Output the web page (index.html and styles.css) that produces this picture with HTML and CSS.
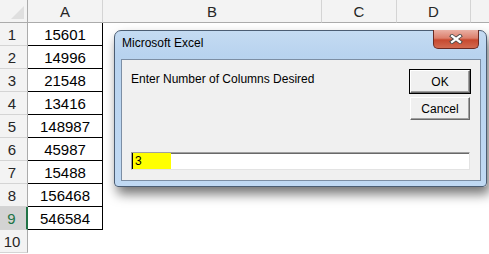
FILE: index.html
```
<!DOCTYPE html>
<html lang="en">
<head>
    <meta charset="UTF-8">
    <title>Microsoft Excel - InputBox</title>
    <link rel="stylesheet" href="styles.css">
</head>
<body>
    <div class="sheet">
        <div class="corner"><span class="tri"></span></div>
        <div class="col-head">A</div>
        <div class="col-head">B</div>
        <div class="col-head">C</div>
        <div class="col-head">D</div>
        <div class="col-head last"></div>

        <div class="row-head">1</div><div class="cell val">15601</div><div class="cell wide"></div>
        <div class="row-head">2</div><div class="cell val">14996</div><div class="cell wide"></div>
        <div class="row-head">3</div><div class="cell val">21548</div><div class="cell wide"></div>
        <div class="row-head">4</div><div class="cell val">13416</div><div class="cell wide"></div>
        <div class="row-head">5</div><div class="cell val">148987</div><div class="cell wide"></div>
        <div class="row-head">6</div><div class="cell val">45987</div><div class="cell wide"></div>
        <div class="row-head">7</div><div class="cell val">15488</div><div class="cell wide"></div>
        <div class="row-head">8</div><div class="cell val">156468</div><div class="cell wide"></div>
        <div class="row-head active">9</div><div class="cell val">546584</div><div class="cell wide"></div>
        <div class="row-head">10</div><div class="cell"></div><div class="cell wide"></div>
    </div>

    <div class="dialog">
        <div class="title">Microsoft Excel</div>
        <div class="close">
            <svg width="14" height="10" viewBox="0 0 14 10">
                <path d="M3 2 L11 8 M11 2 L3 8" stroke="#4a4a4a" stroke-width="4" stroke-linecap="square"/>
                <path d="M3 2 L11 8 M11 2 L3 8" stroke="#ffffff" stroke-width="2.2" stroke-linecap="square"/>
            </svg>
        </div>
        <div class="client">
            <div class="top">
                <div class="prompt">Enter Number of Columns Desired</div>
                <div class="buttons">
                    <button class="btn default">OK</button>
                    <button class="btn">Cancel</button>
                </div>
            </div>
            <div class="input"><span class="sel">3</span></div>
        </div>
    </div>
</body>
</html>
```

FILE: styles.css
```
body {
    margin: 0;
    background: #ffffff;
    font-family: 'Liberation Sans', Arial, sans-serif;
    overflow: hidden;
}
.sheet {
    display: grid;
    grid-template-columns: 28px 75px 219px 75px 74px 1fr;
    grid-template-rows: 23px;
    grid-auto-rows: 23px;
    width: 489px;
}
.corner {
    position: relative;
    background: #f3f3f3;
    border-right: 1px solid #ababab;
    border-bottom: 1px solid #ababab;
}
.tri {
    position: absolute;
    right: 3px;
    bottom: 3px;
    width: 0;
    height: 0;
    border-left: 13px solid transparent;
    border-bottom: 13px solid #dfdfdf;
}
.col-head {
    background: #f3f3f3;
    border-right: 1px solid #d4d4d4;
    border-bottom: 1px solid #ababab;
    font-size: 15px;
    color: #262626;
    display: flex;
    align-items: center;
    justify-content: center;
}
.col-head.last {
    border-right: none;
}
.row-head {
    background: #f3f3f3;
    border-right: 1px solid #ababab;
    border-bottom: 1px solid #d4d4d4;
    font-size: 15px;
    color: #262626;
    display: flex;
    align-items: center;
    justify-content: center;
    padding-right: 3px;
}
.row-head.active {
    background: #d3d3d3;
    color: #217346;
    border-right: 2px solid #217346;
}
.cell {
    grid-column: 2;
}
.cell.wide {
    grid-column: 3 / 7;
}
.cell.val {
    border-right: 1px solid #000000;
    border-bottom: 1px solid #000000;
    font-size: 15px;
    color: #000000;
    display: flex;
    align-items: center;
    justify-content: center;
}

.dialog {
    position: absolute;
    left: 114px;
    top: 30px;
    width: 371px;
    height: 155px;
    border: 1px solid #4b5d73;
    border-radius: 7px 7px 4px 4px;
    background: linear-gradient(to bottom, #c4dbf2 0px, #b8d3ef 24px, #c0d9f3 100%);
    box-shadow: 3px 7px 12px rgba(0, 0, 0, 0.55);
}
.title {
    position: absolute;
    left: 7px;
    top: 5px;
    font-family: 'Liberation Sans', Arial, sans-serif;
    font-size: 12px;
    color: #000000;
}
.close {
    position: absolute;
    top: -1px;
    right: 7px;
    width: 44px;
    height: 18px;
    border: 1px solid #6b2a22;
    border-top: none;
    border-radius: 0 0 5px 5px;
    background: linear-gradient(to bottom, #eab0a4 0%, #dc7f6c 45%, #c7492f 55%, #d26a50 100%);
    display: flex;
    align-items: center;
    justify-content: center;
}
.client {
    position: absolute;
    left: 6px;
    top: 28px;
    right: 5px;
    bottom: 5px;
    border: 1px solid #7c8ea4;
    background: #f0f0f0;
    display: flex;
    flex-direction: column;
    justify-content: space-between;
    padding: 10px 10px 10px 9px;
    font-family: 'Liberation Sans', Arial, sans-serif;
    font-size: 12px;
}
.top {
    display: flex;
    justify-content: space-between;
}
.prompt {
    padding-top: 2px;
    color: #000000;
}
.buttons {
    display: flex;
    flex-direction: column;
    gap: 4px;
}
.btn {
    width: 60px;
    height: 23px;
    background: #f0f0f0;
    border: 1px solid;
    border-color: #ffffff #696969 #696969 #ffffff;
    box-shadow: inset -1px -1px 0 #a0a0a0;
    font-family: 'Liberation Sans', Arial, sans-serif;
    font-size: 12px;
    color: #000000;
    padding: 0;
}
.btn.default {
    outline: 1px solid #000000;
    outline-offset: 0;
}
.input {
    height: 16px;
    border: 1px solid;
    border-color: #a0a0a0 #e3e3e3 #e3e3e3 #a0a0a0;
    box-shadow: inset 1px 1px 0 #696969;
    background: #ffffff;
    display: flex;
    align-items: stretch;
}
.sel {
    width: 36px;
    background: #ffff00;
    color: #000000;
    font-size: 12px;
    line-height: 16px;
    padding-left: 2px;
    border-left: 1px solid #000000;
}
```
